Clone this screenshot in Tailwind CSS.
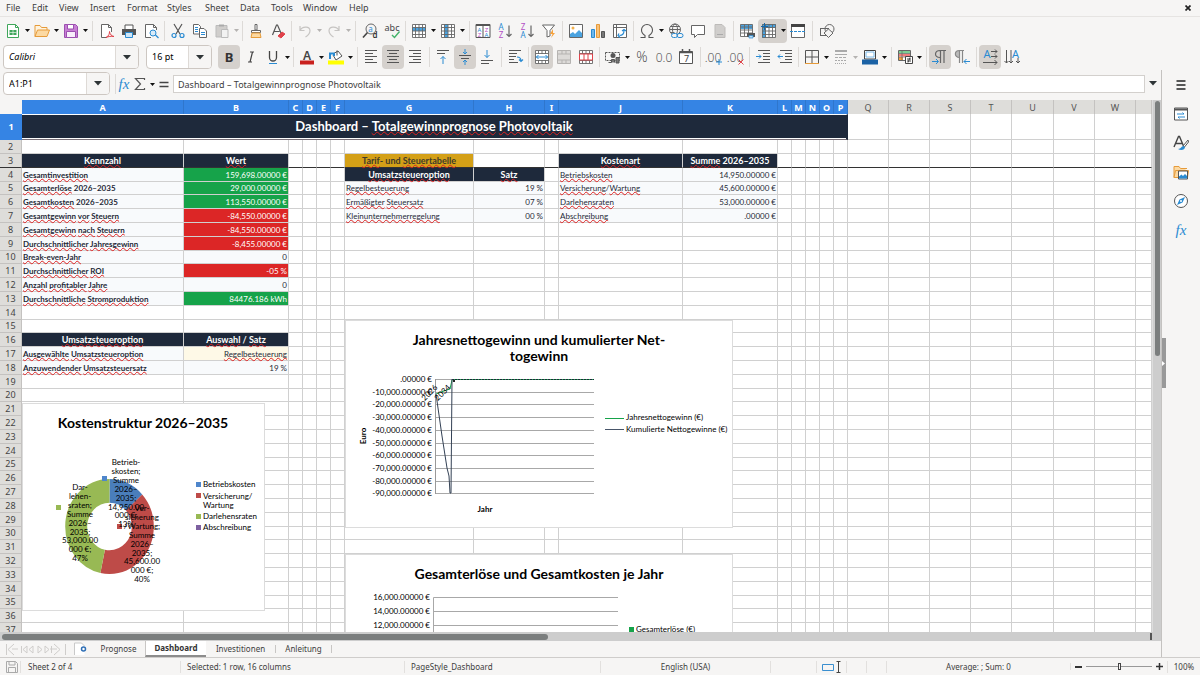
<!DOCTYPE html>
<html lang="en">
<head>
<meta charset="utf-8">
<title>Dashboard – Calc</title>
<script src="https://cdn.jsdelivr.net/npm/@tailwindcss/browser@4"></script>
</head>
<body class="h-screen overflow-hidden flex flex-col bg-[#f6f5f4] font-['Noto_Sans',sans-serif] text-[10px] text-[#3d3d3d]">

<nav class="h-[17px] shrink-0 flex items-center border-b border-[#e6e4e2] pr-1" aria-label="Menu">
  <div id="menu" class="flex flex-1 items-center"></div>
  <button class="w-4 h-4 flex items-center justify-center" aria-label="Close"><svg class="size-[6px]" viewBox="0 0 6 6"><path d="M.5 .5l5 5M5.500 .5l-5 5" stroke="#222" stroke-width="1.700"/></svg></button>
</nav>

<div id="bar1" class="h-[27px] shrink-0 flex items-center pl-[2px]" role="toolbar" aria-label="Standard"></div>

<div class="h-[26px] shrink-0 flex items-center pl-[3px]" role="toolbar" aria-label="Formatting">
  <div class="w-[136px] h-6 mr-[7px] flex rounded border border-[#cdc7c2] bg-white overflow-hidden">
    <input aria-label="Font name" value="Calibri" class="flex-1 min-w-0 pl-[5px] text-[9px] italic text-black outline-none">
    <button aria-label="Font list" class="w-[23px] bg-[#f6f5f4] border-l border-[#dedad6] flex items-center justify-center"><svg class="w-2 h-[5px]" viewBox="0 0 8 5"><path d="M0 0h8L4 4.500z" fill="#2e3436"/></svg></button>
  </div>
  <div class="w-[66px] h-6 mr-[6px] flex rounded border border-[#cdc7c2] bg-white overflow-hidden">
    <input aria-label="Font size" value="16 pt" class="flex-1 min-w-0 pl-[5px] text-[9px] text-black outline-none">
    <button aria-label="Size list" class="w-[23px] bg-[#f6f5f4] border-l border-[#dedad6] flex items-center justify-center"><svg class="w-2 h-[5px]" viewBox="0 0 8 5"><path d="M0 0h8L4 4.500z" fill="#2e3436"/></svg></button>
  </div>
  <div id="bar2" class="flex items-center"></div>
</div>

<div class="flex-1 min-h-0 flex border-b border-[#cfcdcb]">
  <main class="flex-1 min-w-0 flex flex-col border-r border-[#c4c2c0]">
    <div class="h-[30px] shrink-0 flex items-start pt-[2px] pl-[3px]">
      <div class="w-[107px] h-[23px] flex rounded border border-[#cdc7c2] bg-white overflow-hidden">
        <input aria-label="Name box" value="A1:P1" class="flex-1 min-w-0 pl-[5px] text-black text-[9px] outline-none">
        <button aria-label="Names" class="w-[23px] bg-[#f6f5f4] border-l border-[#dedad6] flex items-center justify-center"><svg class="w-2 h-[5px]" viewBox="0 0 8 5"><path d="M0 0h8L4 4.500z" fill="#2e3436"/></svg></button>
      </div>
      <div id="fbar" class="flex h-[24px] items-center w-[63px] shrink-0"></div>
      <input aria-label="Formula" value="Dashboard – Totalgewinnprognose Photovoltaik" class="flex-1 min-w-0 h-[18px] mt-[3px] border border-[#d3d0cd] bg-white pl-1 text-[9px] outline-none">
      <button aria-label="Expand formula bar" class="w-4 h-[23px] flex items-center justify-center"><svg class="w-2 h-[5px]" viewBox="0 0 8 5"><path d="M0 0h8L4 4.500z" fill="#2e3436"/></svg></button>
    </div>

    <div class="flex-1 min-h-0 flex">
      <div class="flex-1 min-w-0 relative overflow-hidden bg-white">
        <table class="w-full table-fixed border-separate border-spacing-0 font-['Lato',sans-serif] text-[8px] leading-[12px] text-[#1f2937]">
          <colgroup id="cols"></colgroup>
          <thead><tr id="head"></tr></thead>
          <tbody id="rows"></tbody>
        </table>

        <!-- cost structure donut -->
        <svg class="absolute left-[22px] top-[303px] w-[243px] h-[208px] font-['Lato',sans-serif] text-[8px]" viewBox="22 403 243 208" role="img" aria-label="Kostenstruktur 2026–2035">
          <rect x="22.500" y="403.500" width="242" height="207" fill="#fff" stroke="#dcdcdc"/>
          <text x="143" y="428" text-anchor="middle" class="text-[14px] font-bold">Kostenstruktur 2026–2035</text>
          <g transform="translate(109.500 526.500) scale(1 1.070) rotate(-90)" fill="none" stroke-width="22">
            <circle r="33.300" pathLength="1000" stroke="#4a7ebb" stroke-dasharray="132 868"/>
            <circle r="33.300" pathLength="1000" stroke="#be4b48" stroke-dasharray="0 132 401 467"/>
            <circle r="33.300" pathLength="1000" stroke="#98b954" stroke-dasharray="0 533 467"/>
          </g>
          <g fill="#4f86cb"><rect x="102" y="476" width="5" height="5"/><rect x="196" y="482" width="5" height="5"/></g>
          <g fill="#be4b48"><rect x="117" y="524" width="5" height="5"/><rect x="196" y="493" width="5" height="5"/></g>
          <g fill="#98b954"><rect x="56" y="505" width="5" height="5"/><rect x="196" y="514" width="5" height="5"/></g>
          <rect x="196" y="525" width="5" height="5" fill="#7d60a0"/>
          <g id="donutLabels" text-anchor="middle"></g>
          <text x="203" y="487">Betriebskosten</text>
          <text x="203" y="499">Versicherung/</text>
          <text x="203" y="508">Wartung</text>
          <text x="203" y="519">Darlehensraten</text>
          <text x="203" y="530">Abschreibung</text>
        </svg>

        <!-- net profit lines -->
        <svg class="absolute left-[345px] top-[220px] w-[388px] h-[208px] font-['Lato',sans-serif] text-[8px]" viewBox="345 320 388 208" role="img" aria-label="Jahresnettogewinn und kumulierter Nettogewinn">
          <rect x="345.500" y="320.500" width="387" height="207" fill="#fff" stroke="#dcdcdc"/>
          <g text-anchor="middle" class="text-[14px] font-bold"><text x="539" y="345">Jahresnettogewinn und kumulierter Net-</text><text x="539" y="361">togewinn</text></g>
          <g id="profitAxis" text-anchor="end"></g>
          <path d="M435.500 379v115" stroke="#999"/>
          <path d="M436 394l8-3 6-2 2-9" fill="none" stroke="#16a34a"/>
          <path d="M452 379.500H594" stroke="#16a34a"/>
          <path d="M452 379.500H594" stroke="#1e293b" stroke-dasharray="2 1"/>
          <path d="M436 394l6 42 5 32 2 8 1 17 1 0 1-114" fill="none" stroke="#334155"/>
          <text text-anchor="end" transform="translate(438 388) rotate(-45)">2026</text>
          <text text-anchor="end" transform="translate(451 388) rotate(-45)">2034</text>
          <path d="M453 381h2" stroke="#222" stroke-width="2"/>
          <path d="M605 418.500h19" stroke="#16a34a"/><text x="626" y="420">Jahresnettogewinn (€)</text>
          <path d="M605 429.500h19" stroke="#475569"/><text x="626" y="432">Kumulierte Nettogewinne (€)</text>
          <text class="font-bold" text-anchor="middle" transform="translate(366 436) rotate(-90)">Euro</text>
          <text class="font-bold" text-anchor="middle" x="485" y="512">Jahr</text>
        </svg>

        <!-- revenue and cost bars, cut by the window edge -->
        <svg class="absolute left-[345px] top-[454px] w-[388px] h-[208px] font-['Lato',sans-serif] text-[8px]" viewBox="345 554 388 208" role="img" aria-label="Gesamterlöse und Gesamtkosten je Jahr">
          <rect x="345.500" y="554.500" width="387" height="207" fill="#fff" stroke="#dcdcdc"/>
          <text x="539" y="579" text-anchor="middle" class="text-[14px] font-bold">Gesamterlöse und Gesamtkosten je Jahr</text>
          <g text-anchor="end"><text x="430" y="600">16,000.00000 €</text><text x="430" y="614">14,000.00000 €</text><text x="430" y="628">12,000.00000 €</text></g>
          <path d="M618 597.500H433.500V700M433 611.500h185M433 625.500h185" fill="none" stroke="#a8a8a8"/>
          <rect x="629" y="627" width="5" height="5" fill="#16a34a"/><text x="636" y="632">Gesamterlöse (€)</text>
        </svg>
      </div>
      <div class="w-[9px] shrink-0 bg-[#cdcdcd] border-l border-[#dddddd] flex justify-center pt-px"><div class="w-[5px] h-[255px] rounded-full bg-[#7b7e7e]"></div></div>
    </div>
    <div class="h-[9px] shrink-0 bg-[#cdcdcd] flex items-center pl-[2px] pr-[9px] justify-between"><div class="w-[546px] h-[6px] rounded-full bg-[#7b7e7e]"></div><div class="w-[2px] h-[7px] bg-[#555]"></div></div>

    <div class="h-4 shrink-0 flex items-stretch text-[8px]">
      <svg class="w-[68px] h-4" viewBox="0 0 68 16" fill="none" stroke="#cfcdcb"><path d="M6.500 3v11M14 3l-6 5.500 6 5.500M18 8h-6M27 5l-4 3.500 4 3.500zM33 5l-4 3.500 4 3.500zM38 5l4 3.500-4 3.500zM45 5l4 3.500-4 3.500zM54 3l6 5.500-6 5.500M50 8h7M65.500 3v11M21.500 5v7M51.500 5v7"/></svg>
      <button aria-label="Add sheet" class="w-6 flex items-center justify-center"><svg class="w-[14px] h-[14px]" viewBox="0 0 14 14"><path d="M1.500 1h7l3 3v9h-10z" fill="#fff"/><path d="M1.500 13V1h7l3 3" fill="none" stroke="#c9c9c9"/><circle cx="10.500" cy="7" r="2" fill="#fff" stroke="#2f6fb5" stroke-width="1.500"/></svg></button>
      <button class="w-[53px]">Prognose</button>
      <button class="w-[61px] bg-white font-bold border-l border-l-[#c8c6c4] border-b-2 border-b-[#8c8c8c] text-[#333]">Dashboard</button>
      <button class="w-[69px]">Investitionen</button>
      <span class="w-px my-1 bg-[#c8c6c4]"></span>
      <button class="w-[55px]">Anleitung</button>
      <span class="w-px my-1 bg-[#c8c6c4]"></span>
    </div>
  </main>

  <aside class="w-[38px] shrink-0 relative">
    <div id="side" class="flex flex-col items-center"></div>
    <button aria-label="Hide sidebar" class="absolute left-0 top-[268px] w-[4px] h-[50px] bg-[#999] flex items-center"><svg class="w-[3px] h-[5px]" viewBox="0 0 3 5"><path d="M0 0l3 2.500L0 5z" fill="#fff"/></svg></button>
  </aside>
</div>

<footer class="h-[17px] shrink-0 flex items-center text-[8px] whitespace-nowrap">
  <div class="w-5 shrink-0 flex justify-center pl-1"><svg class="size-3" viewBox="0 0 12 12" fill="none" stroke="#aaa"><path d="M.5.5h9l2 2v9H.5zM3 .5V4h6V.5M2.500 11.500v-5h7v5"/></svg></div>
  <div class="w-[160px] pl-[7px] border-l border-[#e2e0de]">Sheet 2 of 4</div>
  <div class="w-[224px] pl-[6px] border-l border-[#e2e0de]">Selected: 1 row, 16 columns</div>
  <div class="w-[196px] pl-[6px] border-l border-[#e2e0de]">PageStyle_Dashboard</div>
  <div class="flex-1 text-center border-l border-[#e2e0de]">English (USA)</div>
  <div class="w-[46px] h-3 border-l border-[#e2e0de]"></div>
  <div class="w-[30px] border-l border-[#e2e0de] flex justify-center"><svg class="w-5 h-3" viewBox="0 0 20 12" fill="none"><path d="M.5 3.500h11v6H.5z" stroke="#3a8fd0"/><path d="M14.500 .5h4M16.500 .5v11M14.500 11.500h4" stroke="#444"/></svg></div>
  <div class="w-5 h-3 border-l border-[#e2e0de]"></div>
  <div class="w-5 h-3 border-l border-[#e2e0de]"></div>
  <div class="w-[184px] text-center border-l border-[#e2e0de]">Average: ; Sum: 0</div>
  <div class="w-[97px] border-l border-[#e2e0de] flex items-center justify-center gap-[4px]">
    <button aria-label="Zoom out" class="w-[7px] h-[2px] bg-[#333]"></button>
    <input type="range" aria-label="Zoom" class="w-[66px] h-px appearance-none bg-[#999] [&::-webkit-slider-thumb]:appearance-none [&::-webkit-slider-thumb]:w-[3px] [&::-webkit-slider-thumb]:h-[7px] [&::-webkit-slider-thumb]:bg-[#f6f5f4] [&::-webkit-slider-thumb]:border [&::-webkit-slider-thumb]:border-[#444]">
    <button aria-label="Zoom in" class="size-[7px]"><svg viewBox="0 0 7 7" class="size-[7px]"><path d="M3.500 0v7M0 3.500h7" stroke="#333" stroke-width="1.500"/></svg></button>
  </div>
  <div class="w-[33px] text-center border-l border-[#e2e0de]">100%</div>
</footer>

<script>
const $ = id => document.getElementById(id);

$('menu').innerHTML = [['File',26],['Edit',27],['View',31],['Insert',37],['Format',40],['Styles',38],['Sheet',35],['Data',31],['Tools',32],['Window',46],['Help',30]]
  .map(([t, w]) => `<button class="text-left pl-[6px] text-[9px]" style="width:${w}px">${t}</button>`).join('');

/* Icons on a 16x16 grid */
const K = '#555', B = '#2a8bd2';
const lines = (rows, c = K) => `<path d="${rows.map(([x, y, w]) => `M${x} ${y}h${w}`).join('')}" stroke="${c}"/>`;
const tbl = `<path d="M1.500 1.500h13v13h-13zM1.500 4.500h13M1.500 8h13M1.500 11.500h13M4.500 1.500v13M8 1.500v13M11.500 1.500v13" stroke="#666" stroke-width=".9"/>`;
const num = (t, x = 8, s = 13, c = '#444') => `<text x="${x}" y="13" text-anchor="middle" font-size="${s}" font-weight="300" font-family="Open Sans" fill="${c}">${t}</text>`;
const L = (t, x, y, s, c, w = 400) => `<text x="${x}" y="${y}" text-anchor="middle" font-size="${s}" font-weight="${w}" font-family="Noto Sans" fill="${c}">${t}</text>`;
const I = {
  new: `<path d="M2.500 1.500h8l3 3v10h-11z" fill="#fff" stroke="#3fa65a"/><path d="M10.500 1.500v3h3" stroke="#3fa65a"/><path d="M4.500 7h7v5h-7z" fill="#3fa65a"/><path d="M4.500 9.500h7M8 7v5" stroke="#fff" stroke-width=".6"/>`,
  open: `<path d="M1 13.500v-11h5l1.500 2H13V7" fill="#fff3dd" stroke="#e69b3a"/><path d="M1 13.500L3.500 7H15.500L13 13.500z" fill="#fcd9a2" stroke="#e69b3a"/>`,
  save: `<path d="M1.500 1.500h11l2 2v11h-13z" fill="#c77fd4" stroke="#9c4fb0"/><path d="M4.500 1.500h6v4.500h-6z" fill="#fff" stroke="#9c4fb0"/><path d="M3.500 14.500v-6h9v6z" fill="#f8eefb" stroke="#9c4fb0"/>`,
  pdf: `<path d="M12.500 9V4.500l-3-3h-7v13H8" fill="#fff" stroke="#666"/><path d="M9.500 1.500v3h3" stroke="#666"/><path d="M7 14.500c3-1.500 3.500-4 3.500-6 .5 3 2 4.500 4.500 5-3-.5-5.500 0-8 1z" fill="none" stroke="#e0434b"/>`,
  print: `<path d="M4 6V2h8v4" fill="#fff" stroke="#555"/><path d="M1 6h14v6H1z" fill="#555"/><path d="M4.500 9.500h7v5h-7z" fill="#cfe6f7" stroke="#2a8bd2"/>`,
  preview: `<path d="M13.500 7V4.500l-3-3h-8v13H8" fill="#fff" stroke="#666"/><path d="M10.500 1.500v3h3" stroke="#666"/><circle cx="10" cy="10" r="3" fill="#d8ebf9" stroke="#2a8bd2"/><path d="M12.500 12l3 3" stroke="#2a8bd2" stroke-width="1.300"/>`,
  cut: `<path d="M4 1l6 10M12 1L6 11" stroke="#555" stroke-width="1.200"/><circle cx="4" cy="12.500" r="2" stroke="#2a8bd2" stroke-width="1.200"/><circle cx="12" cy="12.500" r="2" stroke="#2a8bd2" stroke-width="1.200"/>`,
  copy: `<path d="M1.500 1.500h5l2 2v7.500h-7z" fill="#fff" stroke="#666"/><path d="M7.500 5.500h4.500l2.500 2.500v6.500h-7z" fill="#fff" stroke="#666"/><path d="M3 4.500h3M3 6.500h3M3 8.500h3M9 9.500h4M9 11.500h4" stroke="#2a8bd2"/>`,
  paste: `<path d="M2 2.500h11v11.500H2z" fill="#d0cecc" stroke="#bbb"/><path d="M5 1.500h5v2H5z" fill="#aaa"/><path d="M7.500 6.500h6.500v8H7.500z" fill="#f2f2f2" stroke="#bbb"/>`,
  clone: `<path d="M7 1.500h2V7H7z" stroke="#666" fill="#fff"/><path d="M3.500 7.500h9v2h-9z" fill="#fff" stroke="#666"/><path d="M4 10l-1 4.500h10l-1-4.500z" fill="#fcd9a2" stroke="#e69b3a"/>`,
  clear: `<path d="M2.500 12L6.500 2h1l3.500 8M4 8.500h5.500" stroke="#555" stroke-width="1.200"/><path d="M8 13l4-4 3 2-4 4z" fill="#e0434b" stroke="#e0434b"/>`,
  undo: `<path d="M3 3v4.500h4.500M3 7.500C5 3.500 12.500 2.500 13 7.500 13 10.500 11 12.500 8.500 14" stroke="#c6c4c2" stroke-width="1.200"/>`,
  redo: `<path d="M13 3v4.500H8.500M13 7.500C11 3.500 3.500 2.500 3 7.500 3 10.500 5 12.500 7.500 14" stroke="#c6c4c2" stroke-width="1.200"/>`,
  find: `<circle cx="9" cy="6" r="5" stroke="#666"/><path d="M5.500 9.500L1 14.500" stroke="#444" stroke-width="1.600"/>${L('a', 8.500, 9, 8, B)}${L('d', 13, 15, 8, '#333', 600)}`,
  spell: `${L('abc', 8, 8, 9, '#444')}<path d="M8 12l2.500 2.500 5-6" stroke="#43b36a" stroke-width="1.400"/>`,
  row: `<path d="M1 1h14v14H1z" fill="#fff"/><path d="M1 4.500h14V8H1z" fill="#4aa3e0"/>${tbl}`,
  col: `<path d="M1 1h14v14H1z" fill="#fff"/><path d="M4.500 1H8v14H4.500z" fill="#4aa3e0"/>${tbl}`,
  sort: `<path d="M1 1.500h14v13H1zM8 1.500v13" fill="#fff" stroke="#555"/><path d="M1 2h14" stroke="#555" stroke-width="2"/>${L('A', 4.500, 9, 6, B)}${L('Z', 4.500, 14, 6, '#b34fc5')}${L('Z', 11.500, 9, 6, '#b34fc5')}${L('A', 11.500, 14, 6, B)}`,
  asc: `${L('A', 4, 7, 8, B)}${L('Z', 4, 15, 8, '#b34fc5')}<path d="M12 2.500v11M9.500 11l2.500 2.500 2.500-2.500" stroke="#666" stroke-width="1.200"/>`,
  desc: `${L('Z', 4, 7, 8, '#b34fc5')}${L('A', 4, 15, 8, B)}<path d="M12 2.500v11M9.500 11l2.500 2.500 2.500-2.500" stroke="#666" stroke-width="1.200"/>`,
  filter: `<path d="M1.500 2h12L9 7.500V13l-3 1V7.500z" fill="#fff" stroke="#666"/><path d="M12 6l-3 5h2.500L10 15l4-5h-2z" fill="#f6a23c"/>`,
  image: `<path d="M1.500 1.500h13v13h-13z" fill="#fff" stroke="#666"/><circle cx="5" cy="5" r="1.500" fill="#f3b14d"/><path d="M2 14v-3l3-2 2 2 4-4 3 3v4z" fill="#4aa3e0"/>`,
  chart: `<path d="M1.500 6.500h3v8h-3z" fill="#6fb7ea" stroke="#2a8bd2"/><path d="M6.500 1.500h3v13h-3z" fill="#f9c178" stroke="#e69b3a"/><path d="M11.500 8.500h3v6h-3z" fill="#777" stroke="#555"/>`,
  pivot: `<path d="M1.500 1.500h13v13h-13zM1.500 4.500h13M4.500 1.500v13" fill="#fff" stroke="#666"/><path d="M7.500 12.500c3 0 4.500-2 4.500-5M7 10.500l-1 2 2 2M10 8l2-1.500L14 8" stroke="#2a8bd2" stroke-width="1.200"/>`,
  omega: `<path d="M1.500 14.500H6v-2C3.500 11 2.500 9 2.500 7a5.500 5.500 0 0 1 11 0c0 2-1 4-3.500 5.500v2h4.500" stroke="#555" stroke-width="1.100"/>`,
  link: `<circle cx="7" cy="6.500" r="5.500" stroke="#666"/><ellipse cx="7" cy="6.500" rx="2.500" ry="5.500" stroke="#666"/><path d="M1.500 6.500h11M2.500 3.500h9M2.500 9.500h4" stroke="#666"/><rect x="3.500" y="10.500" width="6" height="4" rx="2" fill="#f6f5f4" stroke="#2a8bd2"/><rect x="9" y="10.500" width="6" height="4" rx="2" stroke="#2a8bd2"/>`,
  comment: `<path d="M1.500 2.500h13v9H7.500L4.500 14.500v-3h-3z" fill="#fff" stroke="#666"/>`,
  header: `<path d="M3 1.500h7l3 3v10H3z" fill="#d0cecc" stroke="#bdbbb9"/><path d="M5 11.500h6" stroke="#aaa"/>`,
  parea: `<path d="M1.500 1.500h12v12h-12z" fill="#fff"/><path d="M1.500 1.500h12V6h-12z" fill="#4aa3e0"/><path d="M1.500 1.500h12v12h-12zM1.500 4h12M1.500 7h12M1.500 10h12M5.500 1.500v12M9.500 1.500v12" stroke="#666" stroke-width=".9"/><path d="M8 10h8v4H8z" fill="#555"/><path d="M10 12.500h4v2.500h-4z" fill="#bcdcf5" stroke="#2a8bd2" stroke-width=".7"/>`,
  freeze: `<path d="M1.500 1.500h13v13h-13z" fill="#fff"/><path d="M1 1h14v4H5v10H1z" fill="#4aa3e0"/>${tbl}<path d="M3.500 0v7M0 3.500h7" stroke="#1668a8"/>`,
  split: `<path d="M1.500 1.500h13v13h-13z" fill="#fff" stroke="#666"/><path d="M1 2.500h14" stroke="#444" stroke-width="3"/><path d="M0 8.500h16" stroke="#2a8bd2" stroke-dasharray="3 1"/>`,
  shapes: `<rect x="1.500" y="5.500" width="8" height="7" stroke="#666"/><circle cx="10.500" cy="6" r="4.500" stroke="#666"/><path d="M9.500 6l4.500 4-4.500 4.500L5 10z" fill="#f6f5f4" stroke="#666"/>`,
  bold: L('B', 8, 13, 13, '#333', 700), italic: `<path d="M7 3h4M5 13h4M9.500 3l-2.500 10" stroke="#444" stroke-width="1.200"/>`,
  under: `<path d="M4.500 2v6.500a3.500 3.500 0 0 0 7 0V2" stroke="#444" stroke-width="1.300"/><path d="M4 14.500h8" stroke="#2a8bd2"/>`,
  fcol: `${L('A', 8, 11, 12, '#444', 600)}<path d="M1 13.500h14" stroke="#c9211e" stroke-width="4"/>`,
  hcol: `<path d="M5 5l5-3 4 5-6 4-3-5" fill="#fff" stroke="#555"/><path d="M9 1.500v5" stroke="#555"/><path d="M2 10V4.500h4V7" stroke="#2a8bd2" stroke-width="2"/><path d="M0 13.500h16" stroke="#ffff00" stroke-width="4"/>`,
  left: lines([[2,1.500,12],[2,4.500,8],[2,7.500,12],[2,10.500,8],[2,13.500,12]]),
  center: lines([[2,1.500,12],[4,4.500,8],[2,7.500,12],[4,10.500,8],[2,13.500,12]]),
  right: lines([[2,1.500,12],[6,4.500,8],[2,7.500,12],[6,10.500,8],[2,13.500,12]]),
  vtop: lines([[2,1.500,12],[2,4.500,8]]) + `<path d="M8 15V7.500M5.500 10L8 7.500l2.500 2.500" stroke="${B}"/>`,
  vmid: lines([[2,6.500,12],[4,9.500,8]]) + `<path d="M8 0v5M6 3l2 2 2-2M8 16v-5M6 13l2-2 2 2" stroke="${B}"/>`,
  vbot: lines([[2,11.500,12],[2,14.500,8]]) + `<path d="M8 1v7.500M5.500 6L8 8.500 10.500 6" stroke="${B}"/>`,
  wrap: lines([[2,1.500,12],[2,4.500,8],[2,7.500,7],[2,10.500,5],[2,13.500,9]]) + `<path d="M10 8c3 0 4 1 4 4M12 10.500l2 2 2-2" stroke="${B}" stroke-width="1.200"/>`,
  merge: `<path d="M1.500 1.500h13v13h-13z" fill="#fff"/>${tbl}<path d="M2 5h12v6H2z" fill="#fff"/><path d="M2 8h12M4.500 6L2.500 8l2 2M11.500 6l2 2-2 2" stroke="${B}"/>`,
  mcells: `<path d="M1.500 1.500h13v13h-13z" fill="#dcdad8"/><path d="M1.500 1.500h13v13h-13zM1.500 5h13M1.500 11h13M6 1.500V5M10 1.500V5M6 11v3.500M10 11v3.500" stroke="#b5b3b1"/>`,
  unmerge: `<path d="M1.500 1.500h13v13h-13z" fill="#fff"/>${tbl}<path d="M1.500 5h13v6h-13zM6 5v6M10 5v6" fill="#fff" stroke="#e0434b"/>`,
  curr: `<path d="M.5 3.500h14v8H.5z" stroke="#555" stroke-dasharray="2 1"/><circle cx="8" cy="6.500" r="2.500" fill="#555"/><path d="M3.500 13.500h3v-3h3v3M11 14V8.500h3V14z" fill="#777" stroke="#555"/>`,
  pct: num('%', 8, 14), dec: num('0.0', 8, 12),
  date: `<path d="M1.500 2.500h13v12h-13z" fill="#fff" stroke="#555"/><path d="M1.500 3.500h13M4.500 0v3M11.500 0v3" stroke="#555" stroke-width="1.500"/>${L('7', 8.500, 13, 9, '#444')}`,
  addd: `${num('.00', 7, 12)}<path d="M13 10v6M10 13h6" stroke="${B}"/>`,
  deld: `${num('.00', 7, 12)}<path d="M10.500 10.500l5 5M15.500 10.500l-5 5" stroke="#e0434b"/>`,
  indent: lines([[3,1.500,12],[8,4.500,7],[8,7.500,7],[8,10.500,7],[3,13.500,12]]) + `<path d="M1 7.500h5M4 5.500l2 2-2 2" stroke="${B}"/>`,
  outdent: lines([[3,1.500,12],[8,4.500,7],[8,7.500,7],[8,10.500,7],[3,13.500,12]]) + `<path d="M1 7.500h5M3 5.500l-2 2 2 2" stroke="${B}"/>`,
  borders: `<path d="M1.500 14V1.500h13V14M8 2v12M2 8h12" fill="none" stroke="#555"/><path d="M1 14.500h14" stroke="#e69b3a"/>`,
  bstyle: `<path d="M2 2h12" stroke="#aaa" stroke-width="2"/><path d="M2 5.500h12" stroke="#aaa"/><path d="M2 8.500h12" stroke="#aaa" stroke-dasharray="3 1"/><path d="M2 11.500h12" stroke="#aaa" stroke-dasharray="2 1"/><path d="M2 14.500h12" stroke="#aaa" stroke-dasharray="1 1"/>`,
  bcol: `<path d="M2.500 1.500h11v8.500h-11z" fill="#fff" stroke="#444"/><path d="M4 3h8v5H4z" stroke="#79b8e8"/><path d="M0 13h16" stroke="#1b62a5" stroke-width="5"/>`,
  cond: `<path d="M1.500 1.500h12v10h-12z" fill="#fff" stroke="#666"/><path d="M2 2h11v2.500H2z" fill="#7ccf94"/><path d="M2 5h11v2.500H2z" fill="#ef7e7e"/><path d="M2 8h4v3H2z" fill="#f6a23c"/><path d="M5 2v9M1.500 4.500h12M1.500 8h12" stroke="#666" stroke-width=".7"/><path d="M8.500 7.500h7v7h-7z" fill="#fff" stroke="#444"/><path d="M10 10h4M10 12h4M13 8.500l-2 5" stroke="#444"/>`,
  ltr: `<path d="M8 8.500C1.500 8.500 2.500 1.500 8 1.500h6M8.500 1.500V14M12 1.500V14" stroke="#666" stroke-width="1.200"/><path d="M0 12.500h6M4 10l2.500 2.500L4 15" stroke="${B}"/>`,
  rtl: `<path d="M5.500 8.500C0 8.500 0 1.500 5.500 1.500z" fill="#bbb"/><path d="M5.500 8.500C0 8.500 0 1.500 5.500 1.500H10M5.500 1.500V14M8.500 1.500V14" stroke="#888" stroke-width="1.200"/><path d="M16 12.500h-6M12.500 10L10 12.500l2.500 2.500" stroke="${B}"/>`,
  tdh: `${L('A', 5, 9, 11, B)}<path d="M9 2.500h6M9 7.500h6M1 13.500h14M13 .5l2 2-2 2M13 5.500l2 2-2 2M12.500 11l2.500 2.500-2.500 2.500" stroke="#555"/>`,
  tdv: `${L('A', 11.500, 9, 11, B)}<path d="M2.500 1v13M7 1v13M14 9v5M.5 12l2 2 2-2M5 12l2 2 2-2M12 12l2 2 2-2" stroke="#555"/>`,
  fx: `<text x="8" y="13" text-anchor="middle" font-size="15" font-style="italic" font-family="Liberation Serif" fill="${B}">fx</text>`,
  sum: `<path d="M12.500 4V2.500h-9L8.500 8l-5 5.500h9V12" stroke="#555" stroke-width="1.200"/>`,
  eq: `<path d="M3.500 6.500h9M3.500 10.500h9" stroke="#444" stroke-width="1.600"/>`,
  ham: `<path d="M3.500 4h9M3.500 8h9M3.500 12h9" stroke="#222" stroke-width="1.500"/>`,
  prop: `<path d="M1.500 2h13v12h-13z" fill="#fff" stroke="#555"/><path d="M1.500 3.500h13" stroke="#555" stroke-width="2"/><path d="M4 8h7M9.500 6.500L11 8M12 11H5M6.500 12.500L5 11" stroke="${B}"/>`,
  sty: `<path d="M1 12L5.500 1.500h1L10.500 11M3 8.500h6" stroke="#444" stroke-width="1.400"/><path d="M15 5l-5 6 1.500 1L15.500 7z" fill="#fff" stroke="#555"/><path d="M10.500 11c-2.500 0-2 3-5.500 3 3 2 7 1 7-2z" fill="${B}"/>`,
  gal: `<path d="M1 13.500v-11h5l1.500 2H14" stroke="#e69b3a" fill="#fcd9a2"/><path d="M1 13.500L2.500 6.500H15.500l-1 7z" fill="#fcd9a2" stroke="#e69b3a"/><path d="M5.500 7h9v8h-9z" fill="#fff" stroke="#555"/><path d="M6 14.500v-2l2.500-2 1.500 1.500 2-2 2 2v2.500z" fill="${B}"/>`,
  nav: `<circle cx="8" cy="8" r="6.500" fill="#fff" stroke="#555"/><path d="M12 4l-2.500 5.500L4 12l2.500-5.500z" fill="${B}"/><circle cx="8" cy="8" r="1" fill="#fff"/>`
};
const svg = n => `<svg class="size-4 overflow-visible" viewBox="0 0 16 16" fill="none">${I[n]}</svg>`;
const caret = c => `<svg class="w-[5px] h-[3px]" viewBox="0 0 5 3"><path d="M0 0h5L2.500 3z" fill="${c}"/></svg>`;

/* Toolbar notation: number = separator slot, "!" = pressed, "v" after a colon = has a drop-down, "g" = disabled drop-down */
const bar = items => items.map(it => {
  if (typeof it === 'number') return `<span class="h-5 flex justify-center" style="width:${it}px"><i class="w-px bg-[#dddad7]"></i></span>`;
  const on = it[0] === '!', [n, f] = it.replace('!', '').split(':');
  const b = `<button aria-label="${n}" class="w-[22px] h-6 flex items-center justify-center">${svg(n)}</button>`
    + (f ? `<button aria-label="${n} options" class="w-[7px] h-6 flex items-center justify-center">${caret(f === 'g' ? '#b5b3b1' : '#111')}</button>` : '');
  return `<span class="flex rounded ${on ? 'bg-[#d5d1cd]' : ''}">${b}</span>`;
}).join('');

$('bar1').innerHTML = bar(['new:v','open:v','save:v',7,'pdf','print','preview',5,'cut','copy','paste:g',5,'clone','clear',5,'undo:g','redo:g',7,'find','spell',5,'row:v','col:v',6,'sort','asc','desc','filter',5,'image','chart','pivot',5,'omega:v','link','comment','header',5,'parea','!freeze:v','split',7,'shapes']);
$('bar2').innerHTML = bar(['!bold','italic','under:v',5,'fcol:v','hcol:v',6,'left','!center','right',6,'vtop','!vmid','vbot',6,'wrap',5,'!merge','mcells','unmerge',5,'curr:v','pct','dec','date',6,'addd','deld',5,'indent','outdent',5,'borders:v','bstyle:g','bcol:v',6,'cond:v',6,'!ltr','rtl',6,'!tdh','tdv']);
$('fbar').innerHTML = `<span class="w-[6px] h-5 border-r border-[#dddad7]"></span>` + ['fx','sum'].map(n => `<button aria-label="${n}" class="w-4 h-[22px] flex items-center justify-center">${svg(n)}</button>`).join('') + `<button aria-label="sum options" class="w-[8px] flex justify-center">${caret('#111')}</button><button aria-label="eq">${svg('eq')}</button>`;
$('side').innerHTML = ['ham','prop','sty','gal','nav','fx'].map(n => `<button aria-label="${n}" class="w-full h-[29px] flex items-center justify-center">${svg(n)}</button>`).join('');

/* Sheet */
const widths = [22,162,105,14,14,14,14,129,71,14,124,95,14,14,14,14,14,41,41,41,41,42,41,41];
$('cols').innerHTML = widths.map(w => `<col style="width:${w}px">`).join('') + '<col>';
const letters = 'ABCDEFGHIJKLMNOPQRSTUVWX';
$('head').innerHTML = '<th class="h-[14px] bg-[#f6f5f4] p-0"></th>' + [...letters].map((c, i) =>
  `<th class="h-[14px] p-0 border-r leading-[13px] text-[9px] font-['Noto_Sans'] ${i < 16 ? 'bg-[#3584e4] border-[#2f76cc] text-white font-bold' : 'bg-[#deddda] border-[#c4c2c0] text-[#555] font-normal'}">${c === 'X' ? '' : c}</th>`).join('');

const mark = s => s.replace(/~([^~]+)~/g, `<span class="underline decoration-wavy decoration-[#d22] decoration-1 underline-offset-0 [text-decoration-skip-ink:none]">$1</span>`);
const style = {
  h: 'bg-[#1e293b] text-white text-[9px] font-bold text-center border-[#d0d0d0]',
  y: 'bg-[#d4a017] text-[#3f3a2a] text-[9px] font-bold text-center border-[#d0d0d0]',
  k: 'bg-[#f8fafc] font-bold text-left border-[#d0d0d0]',
  l: 'bg-[#f8fafc] text-left border-[#d0d0d0]',
  r: 'bg-[#f8fafc] text-right border-[#d0d0d0]',
  g: 'bg-[#16a34a] text-white text-right border-[#d0d0d0]',
  d: 'bg-[#dc2626] text-white text-right border-[#d0d0d0]',
  c: 'bg-[#fef9e7] text-right border-[#d0d0d0]'
};
const data = {
  3: { A: ['h','~Kennzahl~'], B: ['h','~Wert~'], G: ['y','~Tarif~- und ~Steuertabelle~'], J: ['h','~Kostenart~'], K: ['h','~Summe~ 2026–2035'] },
  4: { A: ['k','~Gesamtinvestition~'], B: ['g','159,698.00000 €'], G: ['h','~Umsatzsteueroption~'], H: ['h','~Satz~'], J: ['l','~Betriebskosten~'], K: ['r','14,950.00000 €'] },
  5: { A: ['k','~Gesamterlöse~ 2026–2035'], B: ['g','29,000.00000 €'], G: ['l','~Regelbesteuerung~'], H: ['r','19 %'], J: ['l','~Versicherung~/~Wartung~'], K: ['r','45,600.00000 €'] },
  6: { A: ['k','~Gesamtkosten~ 2026–2035'], B: ['g','113,550.00000 €'], G: ['l','~Ermäßigter~ ~Steuersatz~'], H: ['r','07 %'], J: ['l','~Darlehensraten~'], K: ['r','53,000.00000 €'] },
  7: { A: ['k','~Gesamtgewinn~ ~vor~ ~Steuern~'], B: ['d','-84,550.00000 €'], G: ['l','~Kleinunternehmerregelung~'], H: ['r','00 %'], J: ['l','~Abschreibung~'], K: ['r','.00000 €'] },
  8: { A: ['k','~Gesamtgewinn~ ~nach~ ~Steuern~'], B: ['d','-84,550.00000 €'] },
  9: { A: ['k','~Durchschnittlicher~ ~Jahresgewinn~'], B: ['d','-8,455.00000 €'] },
  10: { A: ['k','~Break-even-Jahr~'], B: ['r','0'] },
  11: { A: ['k','~Durchschnittlicher~ ~ROI~'], B: ['d','-05 %'] },
  12: { A: ['k','~Anzahl~ ~profitabler~ ~Jahre~'], B: ['r','0'] },
  13: { A: ['k','~Durchschnittliche~ ~Stromproduktion~'], B: ['g','84476.186 kWh'] },
  16: { A: ['h','~Umsatzsteueroption~'], B: ['h','~Auswahl~ / ~Satz~'] },
  17: { A: ['k','~Ausgewählte~ ~Umsatzsteueroption~'], B: ['c','~Regelbesteuerung~'] },
  18: { A: ['k','~Anzuwendender~ ~Umsatzsteuersatz~'], B: ['r','19 %'] }
};
let html = `<tr><th class="h-[26px] p-0 bg-[#3584e4] text-white font-['Noto_Sans'] font-bold text-[9px]">1</th><td colspan="16" class="p-0"><div class="h-[26px] bg-[#1e293b] border-t border-t-white border-b border-b-[#7a7078] border-r-2 border-r-[#1e293b]"><div class="h-6 border-b border-white text-white text-center font-bold text-[13px] leading-[22px]">${mark('Dashboard – ~Totalgewinnprognose~ ~Photovoltaik~')}</div></div></td>`
  + '<td class="border-r border-b border-[#d0d0d0] p-0"></td>'.repeat(8) + '</tr>';
for (let r = 2; r <= 37; r++) {
  const bb = r === 3 ? 'border-b-[#333]!' : '';
  html += `<tr class="h-[14px] [&:nth-child(5n)]:h-[13px]"><th class="p-0 border-r border-b border-[#c4c2c0] bg-[#deddda] text-[#444] font-normal font-['Noto_Sans'] text-[9px] ${bb}">${r}</th>`;
  for (const c of letters) {
    const v = data[r] && data[r][c];
    html += v ? `<td class="border-r border-b p-0 px-px whitespace-nowrap ${style[v[0]]} ${bb}">${mark(v[1])}</td>` : `<td class="border-r border-b border-[#d0d0d0] p-0 ${bb}"></td>`;
  }
  html += '</tr>';
}
$('rows').innerHTML = html;

/* Chart labels */
const stack = (x, y, ls) => ls.map((t, i) => `<text x="${x}" y="${Math.round(y + i * 8.900)}">${t}</text>`).join('');
$('donutLabels').innerHTML = stack(126, 465, ['Betrieb-','skosten;','Summe','2026–','2035;','14,950.00','000 €;','13%'])
  + stack(142, 511, ['Ver-','sicherung','/Wartung;','Summe','2026–','2035;','45,600.00','000 €;','40%'])
  + stack(80, 490, ['Dar-','lehen-','sraten;','Summe','2026–','2035;','53,000.00','000 €;','47%']);
$('profitAxis').innerHTML = Array.from({ length: 10 }, (_, i) => {
  const y = Math.round(379 + i * 12.700);
  return `<text x="432" y="${y + 3}">${i ? `-${i}0,000` : ''}.00000 €</text><path d="M435 ${y + .5}h159" stroke="#a8a8a8"/>`;
}).join('');
</script>
</body>
</html>
